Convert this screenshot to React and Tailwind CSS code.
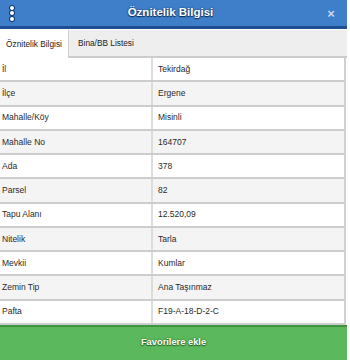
import React from "react";

const rows = [
  ["İl", "Tekirdağ"],
  ["İlçe", "Ergene"],
  ["Mahalle/Köy", "Misinli"],
  ["Mahalle No", "164707"],
  ["Ada", "378"],
  ["Parsel", "82"],
  ["Tapu Alanı", "12.520,09"],
  ["Nitelik", "Tarla"],
  ["Mevkii", "Kumlar"],
  ["Zemin Tip", "Ana Taşınmaz"],
  ["Pafta", "F19-A-18-D-2-C"],
];

export default function App() {
  return (
    <div className="w-[350px] h-[360px] bg-white overflow-hidden" style={{ fontFamily: '"Liberation Sans", Arial, sans-serif' }}>
      <div className="w-[347px] flex flex-col h-full">
        {/* Header */}
        <div className="h-[29px] bg-[#3f7fca] border-b-[3px] border-[#1f4f93] flex items-center relative shrink-0">
          <div className="w-[22px] flex flex-col items-center justify-center gap-[1.5px] pl-[2px]">
            <span className="w-[4px] h-[4px] rounded-full bg-white ring-1 ring-[#123a70]" />
            <span className="w-[4px] h-[4px] rounded-full bg-white ring-1 ring-[#123a70]" />
            <span className="w-[4px] h-[4px] rounded-full bg-white ring-1 ring-[#123a70]" />
          </div>
          <div className="flex-1 text-center text-white font-bold text-[11.5px] [text-shadow:0_0_2px_#0b2a55,0_1px_1px_#0b2a55]">
            Öznitelik Bilgisi
          </div>
          <div className="w-[28px] text-center text-[#c9d8ec] font-bold text-[13px] leading-none pr-[4px]">×</div>
        </div>
        {/* Tabs */}
        <div className="h-[29px] bg-[#eeeeee] border-t border-white flex items-stretch shrink-0 relative">
          <div className="w-[69px] bg-white border-r border-[#cfcfcf] flex items-center justify-center text-[8.3px] text-[#222] z-10">
            Öznitelik Bilgisi
          </div>
          <div className="flex-1 flex items-start border-b-2 border-[#cccccc]">
            <div className="pl-[9px] h-full flex items-center text-[8.3px] text-[#222]">Bina/BB Listesi</div>
          </div>
        </div>
        {/* Table */}
        <div className="flex flex-col border-r-2 border-[#d0d0d0] mr-[1px]">
          {rows.map(([k, v], i) => (
            <div
              key={k}
              className={`h-[24.27px] flex border-b-2 border-[#cdcdcd] ${i % 2 === 1 ? "bg-[#f4f4f4]" : "bg-white"}`}
            >
              <div className="w-[153px] border-r-2 border-[#dcdcdc] pl-[2px] flex items-center text-[8.5px] text-[#2a2a2a]">
                {k}
              </div>
              <div className="flex-1 pl-[5px] flex items-center text-[8.5px] text-[#2a2a2a]">{v}</div>
            </div>
          ))}
        </div>
        {/* Button */}
        <div className="flex-1 bg-[#5cb85c] border-t-2 border-[#3f943f] flex items-center justify-center">
          <span className="text-white font-bold text-[9.3px] [text-shadow:0_0_2px_#1f5f1f,0_1px_1px_#1f5f1f]">
            Favorilere ekle
          </span>
        </div>
      </div>
    </div>
  );
}
